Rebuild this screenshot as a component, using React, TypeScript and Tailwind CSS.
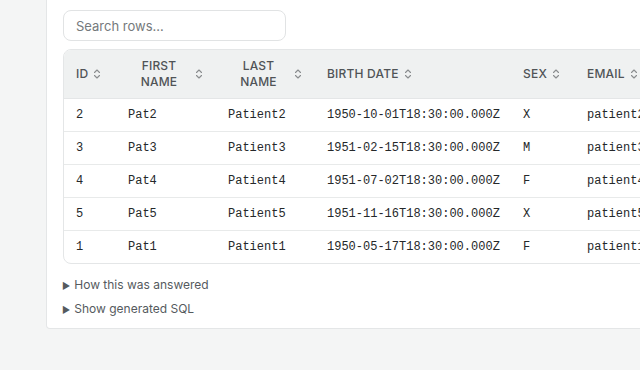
import React from "react";

type Row = {
  id: string;
  first: string;
  last: string;
  birth: string;
  sex: string;
  email: string;
};

const rows: Row[] = [
  { id: "2", first: "Pat2", last: "Patient2", birth: "1950-10-01T18:30:00.000Z", sex: "X", email: "patient2@example.com" },
  { id: "3", first: "Pat3", last: "Patient3", birth: "1951-02-15T18:30:00.000Z", sex: "M", email: "patient3@example.com" },
  { id: "4", first: "Pat4", last: "Patient4", birth: "1951-07-02T18:30:00.000Z", sex: "F", email: "patient4@example.com" },
  { id: "5", first: "Pat5", last: "Patient5", birth: "1951-11-16T18:30:00.000Z", sex: "X", email: "patient5@example.com" },
  { id: "1", first: "Pat1", last: "Patient1", birth: "1950-05-17T18:30:00.000Z", sex: "F", email: "patient1@example.com" },
];

const headers = ["ID", "FIRST NAME", "LAST NAME", "BIRTH DATE", "SEX", "EMAIL"];
const widths = ["w-[52px]", "w-[100px]", "w-[99px]", "w-[196px]", "w-[64px]", "w-[200px]"];

const SortIcon: React.FC = () => (
  <svg width="8" height="10" viewBox="0 0 8 10" fill="none" className="shrink-0 text-[#8a8d8f]">
    <path d="M1.5 3.5L4 1L6.5 3.5" stroke="currentColor" strokeWidth="1.1" strokeLinecap="round" strokeLinejoin="round" />
    <path d="M1.5 6.5L4 9L6.5 6.5" stroke="currentColor" strokeWidth="1.1" strokeLinecap="round" strokeLinejoin="round" />
  </svg>
);

const Disclosure: React.FC<{ label: string }> = ({ label }) => (
  <div className="flex items-center gap-[4px] h-[24px] text-[12px] text-[#555a5e]">
    <span className="text-[9px] text-[#555a5e] leading-none">▶</span>
    <span>{label}</span>
  </div>
);

export default function App() {
  return (
    <div
      className="w-[640px] h-[370px] overflow-hidden bg-[#f4f5f5]"
      style={{ fontFamily: "Inter, 'Noto Sans', sans-serif" }}
    >
      {/* Result card (top is scrolled off) */}
      <div className="ml-[46px] w-[720px] bg-white border border-t-0 border-[#e4e6e7] rounded-b-[4px] pl-[16px] pt-[10px] pb-[7px]">
        <input
          placeholder="Search rows…"
          className="w-[223px] h-[31px] rounded-[8px] border border-[#e1e3e4] px-[12px] text-[13px] text-[#222] placeholder:text-[#75797c] outline-none"
        />

        <div className="mt-[8px] w-[660px] border border-[#e4e6e7] rounded-[8px] overflow-hidden">
          <table className="table-fixed border-collapse w-full">
            <colgroup>
              {widths.map((w, i) => (
                <col key={i} className={w} />
              ))}
            </colgroup>
            <thead>
              <tr className="bg-[#eff1f1] border-b border-[#e4e6e7]">
                {headers.map((h) => (
                  <th key={h} className="h-[48px] pl-[12px] pr-[13px] font-medium text-[12px] text-[#505457] text-left">
                    <div className="flex items-center gap-[5px]">
                      <span className="text-center leading-[16px] tracking-[0.2px]">{h}</span>
                      <SortIcon />
                    </div>
                  </th>
                ))}
              </tr>
            </thead>
            <tbody style={{ fontFamily: "'Liberation Mono', 'DejaVu Sans Mono', monospace" }}>
              {rows.map((r, i) => (
                <tr key={r.id} className={i < rows.length - 1 ? "border-b border-[#e8eaea]" : ""}>
                  {[r.id, r.first, r.last, r.birth, r.sex, r.email].map((v, j) => (
                    <td key={j} className="h-[33px] pl-[12px] pr-[13px] text-[12px] text-[#25282a] whitespace-nowrap">
                      {v}
                    </td>
                  ))}
                </tr>
              ))}
            </tbody>
          </table>
        </div>

        <div className="mt-[9px] -ml-[1px]">
          <Disclosure label="How this was answered" />
          <Disclosure label="Show generated SQL" />
        </div>
      </div>
    </div>
  );
}
